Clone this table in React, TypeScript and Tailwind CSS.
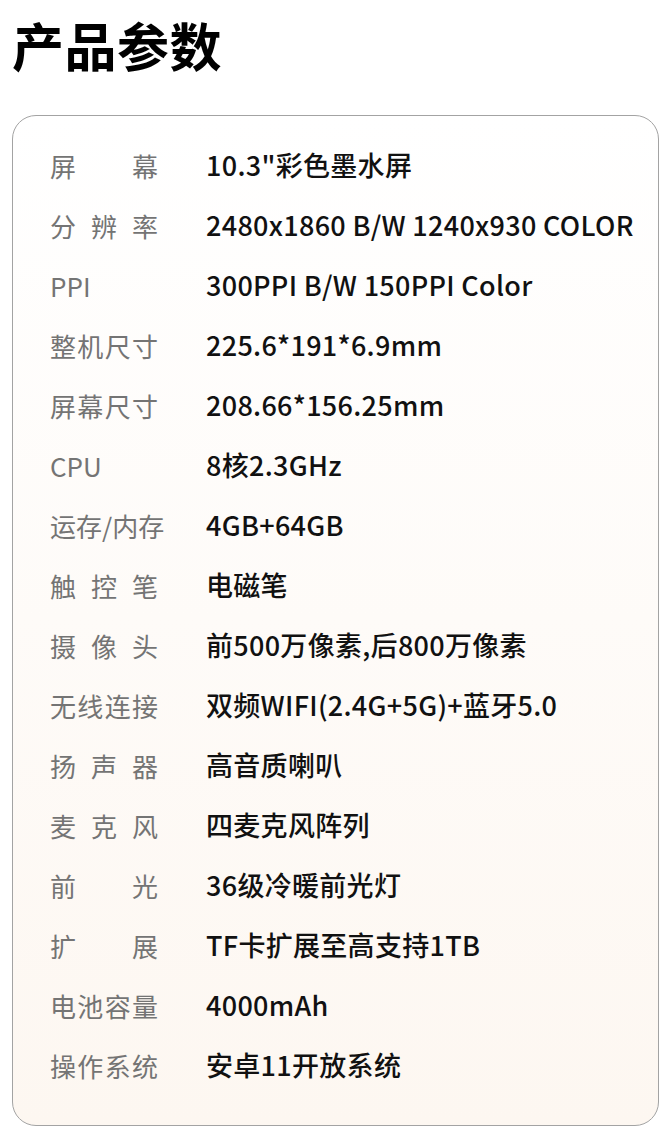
const specs: { label: string; value: string; justify?: boolean }[] = [
  { label: '屏幕', value: '10.3"彩色墨水屏', justify: true },
  { label: '分辨率', value: '2480x1860 B/W 1240x930 COLOR', justify: true },
  { label: 'PPI', value: '300PPI B/W 150PPI Color' },
  { label: '整机尺寸', value: '225.6*191*6.9mm', justify: true },
  { label: '屏幕尺寸', value: '208.66*156.25mm', justify: true },
  { label: 'CPU', value: '8核2.3GHz' },
  { label: '运存/内存', value: '4GB+64GB' },
  { label: '触控笔', value: '电磁笔', justify: true },
  { label: '摄像头', value: '前500万像素,后800万像素', justify: true },
  { label: '无线连接', value: '双频WIFI(2.4G+5G)+蓝牙5.0', justify: true },
  { label: '扬声器', value: '高音质喇叭', justify: true },
  { label: '麦克风', value: '四麦克风阵列', justify: true },
  { label: '前光', value: '36级冷暖前光灯', justify: true },
  { label: '扩展', value: 'TF卡扩展至高支持1TB', justify: true },
  { label: '电池容量', value: '4000mAh', justify: true },
  { label: '操作系统', value: '安卓11开放系统', justify: true },
];

export default function App() {
  return (
    <div
      className="w-[671px] h-[1136px] bg-white px-3 pt-[14px]"
      style={{ fontFamily: '"Noto Sans CJK SC", "Noto Sans", sans-serif' }}
    >
      <h1 className="text-[52px] font-bold leading-[62px] text-black tracking-[0.5px]">产品参数</h1>

      <div className="mt-[39px] h-[1011px] rounded-[24px] border-[1.5px] border-[#a3a3a3] bg-gradient-to-b from-white to-[#fdf7f1] pl-[37px] pt-[19px]">
        {specs.map((s) => (
          <div key={s.label} className="flex h-[60px] items-center">
            <div
              className={`w-[108px] shrink-0 whitespace-nowrap text-[26px] font-normal text-[#747474] ${
                s.justify ? 'text-justify [text-align-last:justify]' : ''
              }`}
            >
              {s.label}
            </div>
            <div className="ml-[48px] whitespace-nowrap text-[27px] font-medium tracking-[0.3px] text-[#111]">
              {s.value}
            </div>
          </div>
        ))}
      </div>
    </div>
  );
}
